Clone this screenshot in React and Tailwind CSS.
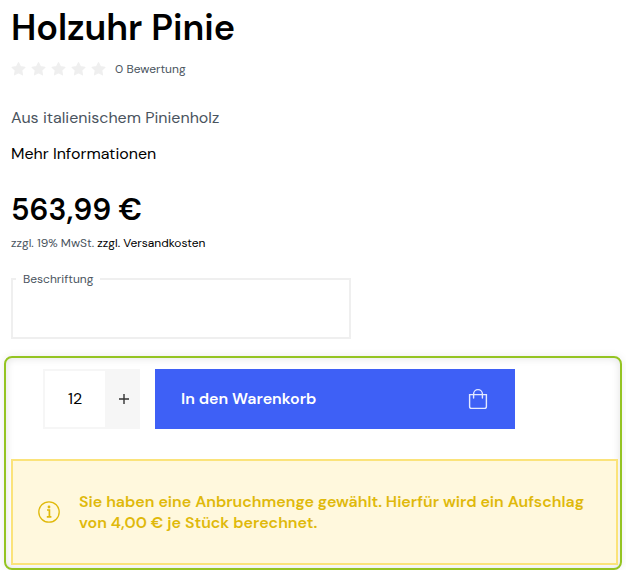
import React, { useState } from 'react';

const StarIcon = () => (
    <svg className="h-4 w-4" viewBox="0 0 16 16" fill="#efefef" stroke="#efefef" strokeWidth="1.2" strokeLinejoin="round" aria-hidden="true">
        <path d="M7.5 1.7l2 4 4.4.6-3.2 3.1.8 4.4-4-2.1-4 2.1.8-4.4L1.1 6.3l4.4-.6z" />
    </svg>
);

const BagIcon = () => (
    <svg className="h-6 w-6" viewBox="0 0 24 24" fill="none" stroke="#e4e9ff" strokeWidth="1.4" aria-hidden="true">
        <path d="M3.6 7.6h16.8v11.8a2 2 0 0 1-2 2H5.6a2 2 0 0 1-2-2z" />
        <path d="M7.6 11V7a4.4 4.4 0 0 1 8.8 0v4" strokeLinecap="round" />
    </svg>
);

const InfoIcon = () => (
    <svg className="h-6 w-6 shrink-0" viewBox="0 0 24 24" fill="none" stroke="#e0b90b" aria-hidden="true">
        <circle cx="12" cy="12" r="10.2" strokeWidth="1.3" />
        <path d="M10 10h2.4v6.5M9.8 16.8h4.6" strokeWidth="1.7" />
        <circle cx="12" cy="7" r="1.4" fill="#e0b90b" stroke="none" />
    </svg>
);

function Rating({ count }) {
    return (
        <div className="mt-[5px] flex h-6 items-center text-xs text-[#4a545e]">
            <div className="flex gap-1">
                {[1, 2, 3, 4, 5].map((n) => <StarIcon key={n} />)}
            </div>
            <span className="ml-2">{count} Bewertung</span>
        </div>
    );
}

function App() {
    const [quantity, setQuantity] = useState(12);

    return (
        <main className="bg-white px-1 pt-1 font-['DM_Sans',Inter,sans-serif] text-black">
            {/* --- Product info --- */}
            <section className="px-[7px]">
                <h1 className="text-4xl leading-12 font-semibold">Holzuhr Pinie</h1>
                <Rating count={0} />
                <p className="mt-[25px] text-base leading-6 text-[#4a545e]">Aus italienischem Pinienholz</p>
                <a href="#info" className="mt-3 block w-fit text-base leading-6">Mehr Informationen</a>
                <p className="mt-[26px] text-3xl leading-9 font-semibold">563,99 €</p>
                <p className="mt-[5px] text-xs leading-5 text-[#4a545e]">
                    zzgl. 19% MwSt. <a href="#versand" className="text-black">zzgl. Versandkosten</a>
                </p>

                <fieldset className="mt-[18px] w-full max-w-[340px] border-2 border-[#efefef]">
                    <legend className="ml-[3px] px-[7px] text-xs text-[#4a545e]">
                        <label htmlFor="beschriftung">Beschriftung</label>
                    </legend>
                    <textarea id="beschriftung" className="block h-[50px] w-full resize-none px-3 text-base outline-none" />
                </fieldset>
            </section>

            {/* --- Basket --- */}
            <section className="mt-[17px] rounded-lg border-2 border-[#94c422] pt-[11px] pr-[2px] pb-[3px] pl-[5px] shadow-[inset_0_0_8px_rgba(0,0,0,0.12),0_0_8px_rgba(0,0,0,0.08)]">
                <div className="flex gap-[15px] px-8">
                    <div className="flex h-15 bg-[#f6f6f6]">
                        <input
                            type="text"
                            aria-label="Menge"
                            value={quantity}
                            onChange={(e) => setQuantity(Number(e.target.value) || 0)}
                            className="w-16 border-2 border-[#f6f6f6] bg-white text-center text-base outline-none"
                        />
                        <button type="button" aria-label="Menge erhöhen" onClick={() => setQuantity(quantity + 1)} className="flex w-[33px] items-center justify-center">
                            <svg className="h-3 w-3" viewBox="0 0 12 12" stroke="#333" strokeWidth="1.4" aria-hidden="true">
                                <path d="M6 1v10M1 6h10" />
                            </svg>
                        </button>
                    </div>
                    <button type="button" className="flex h-15 max-w-[360px] grow items-center justify-between bg-[#3e60f6] pr-[25px] pl-[26px] text-base font-semibold text-white">
                        In den Warenkorb
                        <BagIcon />
                    </button>
                </div>

                <div role="alert" className="mt-[30px] flex items-center gap-[18px] border-2 border-[#fbe37a] bg-[#fff8dd] py-[30px] pr-3 pl-6 text-base leading-[21px] font-semibold text-[#e0b90b]">
                    <InfoIcon />
                    <p>Sie haben eine Anbruchmenge gewählt. Hierfür wird ein Aufschlag von 4,00 € je Stück berechnet.</p>
                </div>
            </section>
        </main>
    );
}

export default App;
